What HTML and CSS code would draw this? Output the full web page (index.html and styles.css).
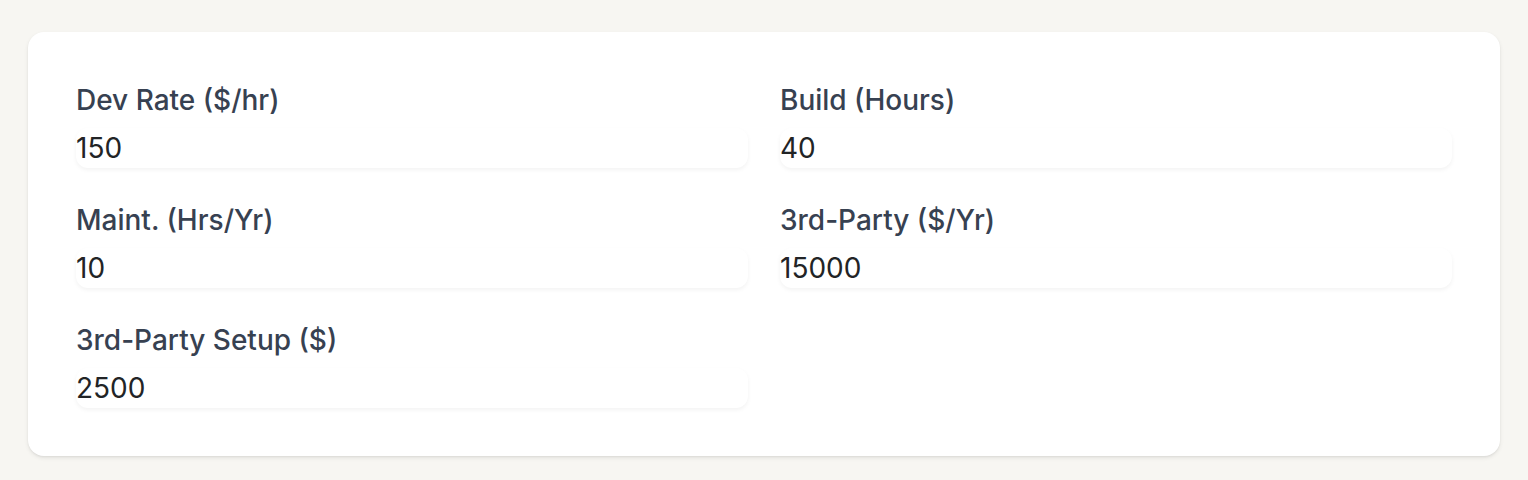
FILE: index.html
```html
<!DOCTYPE html>
<html lang="en">
<head>
  <meta charset="UTF-8" />
  <title>Build vs Buy</title>
  <link rel="stylesheet" href="styles.css">
</head>
<body>
  <div class="card">
    <div class="fields">
      <div class="field">
        <label for="dev-rate">Dev Rate ($/hr)</label>
        <input type="number" id="dev-rate" value="150" />
      </div>
      <div class="field">
        <label for="build-hours">Build (Hours)</label>
        <input type="number" id="build-hours" value="40" />
      </div>
      <div class="field">
        <label for="maint-hours">Maint. (Hrs/Yr)</label>
        <input type="number" id="maint-hours" value="10" />
      </div>
      <div class="field">
        <label for="vendor-cost">3rd-Party ($/Yr)</label>
        <input type="number" id="vendor-cost" value="15000" />
      </div>
      <div class="field">
        <label for="vendor-setup">3rd-Party Setup ($)</label>
        <input type="number" id="vendor-setup" value="2500" />
      </div>
    </div>
  </div>
</body>
</html>
```

FILE: styles.css
```css
/* === Basic Reset === */
* {
  margin: 0;
  padding: 0;
  box-sizing: border-box;
}

body {
  font-family: 'Inter', 'Liberation Sans', sans-serif;
  background: #f7f6f2;
  padding: 32px 28px 24px;
}

.card {
  background: #ffffff;
  border-radius: 16px;
  padding: 48px;
  box-shadow: 0 2px 4px rgba(0, 0, 0, 0.08), 0 1px 2px rgba(0, 0, 0, 0.05);
}

.fields {
  display: grid;
  grid-template-columns: 1fr 1fr;
  column-gap: 32px;
  row-gap: 32px;
}

.field {
  display: flex;
  flex-direction: column;
  gap: 8px;
}

label {
  font-size: 28px;
  line-height: 40px;
  font-weight: 500;
  color: #374151;
}

input[type="number"] {
  font-family: inherit;
  font-size: 28px;
  line-height: 40px;
  height: 40px;
  color: #222426;
  border: none;
  outline: none;
  background: #ffffff;
  border-radius: 12px;
  box-shadow: 0 2px 4px rgba(0, 0, 0, 0.05);
  width: 100%;
  -moz-appearance: textfield;
}

input[type="number"]::-webkit-outer-spin-button,
input[type="number"]::-webkit-inner-spin-button {
  -webkit-appearance: none;
  margin: 0;
}
```
